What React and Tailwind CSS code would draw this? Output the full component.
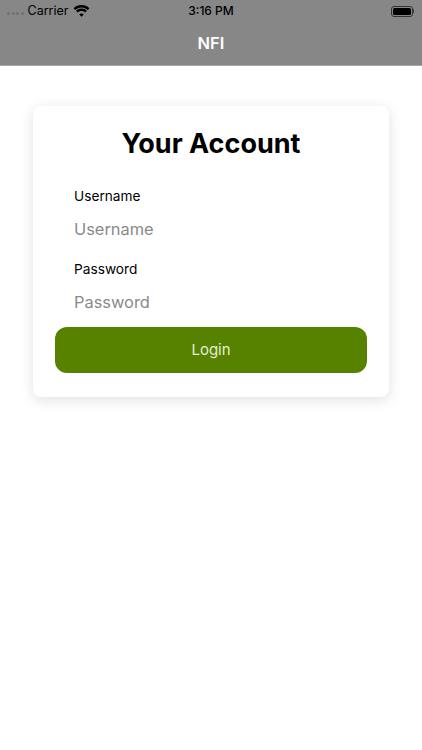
function Wifi() {
  return (
    <svg className="w-[17px] h-[12px]" viewBox="0 0 18 13" fill="#000">
      <path d="M9 2.6c2.6 0 5 1 6.8 2.7L17.6 3.4C15.3 1.300 12.300 0 9 0S2.700 1.300.4 3.400l1.800 1.900C4 3.600 6.400 2.600 9 2.600z" />
      <path d="M9 6.400c1.600 0 3 .6 4.100 1.600l1.800-1.900C13.300 4.700 11.300 3.800 9 3.800S4.700 4.700 3.100 6.100L4.900 8C6 7 7.400 6.400 9 6.400z" />
      <path d="M9 9.200c-1 0-1.800.4-2.400 1L9 12.800l2.400-2.600c-.6-.6-1.400-1-2.400-1z" />
    </svg>
  );
}

function StatusBar() {
  return (
    <div className="h-5 pt-[2px] px-[6px] flex items-center justify-between text-[12.500px] text-black">
      <div className="w-[150px] flex items-center">
        <div className="flex gap-[1.500px] ml-[1px] mr-[4px] mt-[5px]">
          {[0, 1, 2, 3].map((i) => (
            <span key={i} className="w-[3px] h-[3px] rounded-full bg-[#707070]" />
          ))}
        </div>
        <span className="mr-[5px]">Carrier</span>
        <Wifi />
      </div>
      <span className="text-[12px] font-medium">3:16 PM</span>
      <div className="w-[150px] flex items-center justify-end pr-[2px]">
        <div className="w-[22px] h-[11px] rounded-[3px] border border-[#333] p-[1px]">
          <div className="w-full h-full rounded-[1.500px] bg-black" />
        </div>
        <div className="w-[1px] h-[4px] bg-[#444]" />
      </div>
    </div>
  );
}

function Field({ label, type }) {
  return (
    <div className="pl-[41px] pr-4">
      <label className="block h-[22px] leading-[23px] text-[13.700px] text-black">{label}</label>
      <input
        type={type}
        placeholder={label}
        className="block w-full h-[44px] text-[16.400px] outline-none text-black placeholder:text-[#8a8a8a]"
      />
    </div>
  );
}

export default function App() {
  return (
    <div className="w-[422px] h-[750px] bg-white overflow-hidden font-['Inter',sans-serif]">
      <header className="h-[66px] bg-[#878787] border-b border-[#a6a6a6]">
        <StatusBar />
        <h1 className="h-[46px] flex items-center justify-center text-[16.500px] font-semibold text-white">NFI</h1>
      </header>

      <main className="pt-10 px-[33px]">
        <div className="h-[291px] rounded-lg bg-white shadow-[0_3px_14px_rgba(0,0,0,0.12)]">
          <h2 className="pt-5 h-[79px] text-center text-[27px] leading-[36px] font-bold text-black">Your Account</h2>
          <div className="flex flex-col gap-[7px]">
            <Field label="Username" type="text" />
            <Field label="Password" type="password" />
          </div>
          <div className="px-[22px] mt-[3px]">
            <button className="w-full h-[46px] pt-[1px] rounded-xl bg-[#568200] text-[15px] text-[#e4edd2]">Login</button>
          </div>
        </div>
      </main>
    </div>
  );
}
